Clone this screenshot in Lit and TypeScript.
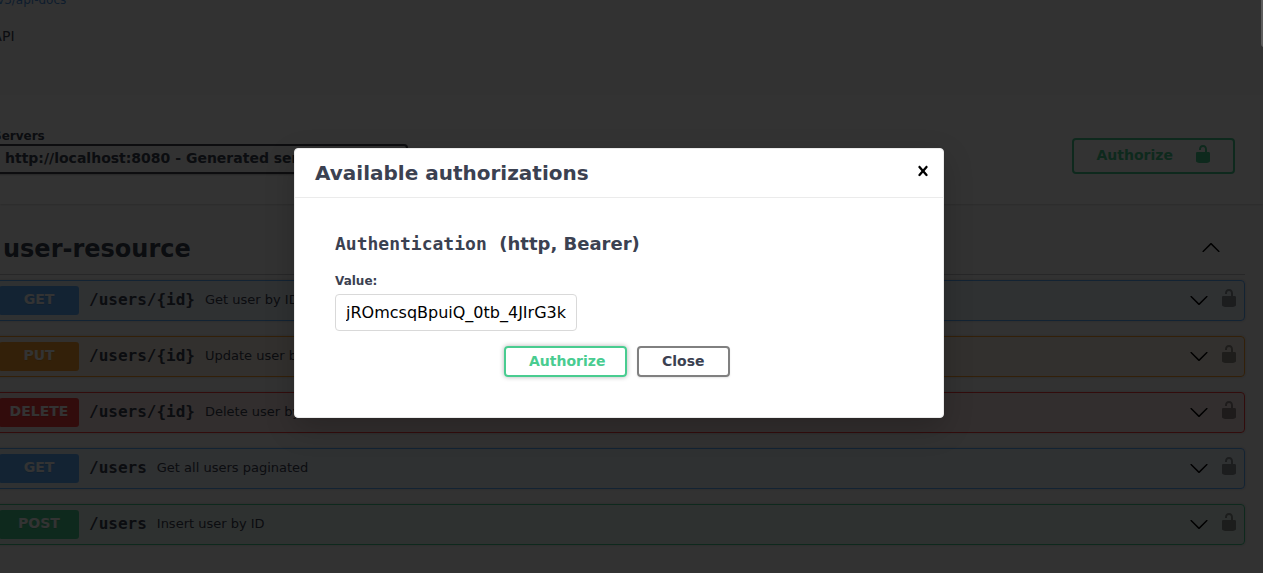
import { LitElement, html, css, svg } from "lit";
import { customElement, property } from "lit/decorators.js";

const UNLOCKED =
  "M15.8 8H14V5.6C14 2.703 12.665 1 10 1 7.334 1 6 2.703 6 5.6V6h2v-.801C8 3.754 8.797 3 10 3c1.203 0 2 .754 2 2.199V8H4c-.553 0-1 .646-1 1.199V17c0 .549.428 1.139.951 1.307l1.197.387C5.672 18.861 6.55 19 7.1 19h5.8c.549 0 1.428-.139 1.951-.307l1.196-.387c.524-.167.953-.757.953-1.306V9.199C17 8.646 16.352 8 15.8 8z";
const ARROW_DOWN =
  "M17.418 6.109c.272-.268.709-.268.979 0s.271.701 0 .969l-7.908 7.83c-.27.268-.707.268-.979 0l-7.908-7.83c-.27-.268-.27-.701 0-.969.271-.268.709-.268.979 0L10 13.25l7.418-7.141z";
const ARROW_UP =
  "M17.418 14.908c.272.268.709.268.979 0s.271-.701 0-.969l-7.908-7.83c-.27-.268-.707-.268-.979 0l-7.908 7.83c-.27.268-.27.701 0 .969.271.268.709.268.979 0L10 7.767l7.418 7.141z";
const CLOSE =
  "M14.348 14.849c-.469.469-1.229.469-1.697 0L10 11.819l-2.651 3.029c-.469.469-1.229.469-1.697 0-.469-.469-.469-1.229 0-1.697l2.758-3.15-2.759-3.152c-.469-.469-.469-1.228 0-1.697.469-.469 1.228-.469 1.697 0L10 8.183l2.651-3.031c.469-.469 1.228-.469 1.697 0 .469.469.469 1.229 0 1.697l-2.758 3.152 2.758 3.15c.469.469.469 1.229 0 1.698z";

const icon = (d: string, size = 20) => html`
  <svg width=${size} height=${size} viewBox="0 0 20 20">${svg`<path d=${d}></path>`}</svg>
`;

@customElement("operation-row")
export class OperationRow extends LitElement {
  @property() method = "get";
  @property() path = "";
  @property() summary = "";

  static styles = css`
    :host { display: block; }
    svg { display: block; }
    .row {
      box-sizing: border-box;
      height: 41px;
      display: flex;
      align-items: center;
      padding: 0 5px;
      border: 1px solid var(--tone);
      border-radius: 4px;
      box-shadow: 0 0 3px rgba(0, 0, 0, 0.19);
      color: #3b4151;
    }
    .get { --tone: #61affe; background: rgba(97, 175, 254, 0.1); }
    .put { --tone: #fca130; background: rgba(252, 161, 48, 0.1); }
    .delete { --tone: #f93e3e; background: rgba(249, 62, 62, 0.1); }
    .post { --tone: #49cc90; background: rgba(73, 204, 144, 0.1); }
    .method {
      width: 80px;
      height: 29px;
      line-height: 27px;
      border-radius: 3px;
      background: var(--tone);
      color: #fff;
      font-size: 14px;
      font-weight: 700;
      text-align: center;
      text-transform: uppercase;
      text-shadow: 0 1px 0 rgba(0, 0, 0, 0.1);
    }
    .path {
      padding: 0 10px 2px;
      font: 600 16px/20px "DejaVu Sans Mono", monospace;
    }
    .summary { flex: 1; padding-bottom: 2px; font-size: 13px; }
    .lock { margin: -5px 0 0 10px; opacity: 0.4; fill: #000; }
    .arrow { margin-top: -2px; }
  `;

  render() {
    return html`
      <div class="row ${this.method}">
        <span class="method">${this.method}</span>
        <span class="path">${this.path}</span>
        <span class="summary">${this.summary}</span>
        <span class="arrow">${icon(ARROW_DOWN)}</span>
        <span class="lock">${icon(UNLOCKED)}</span>
      </div>
    `;
  }
}

@customElement("auth-dialog")
export class AuthDialog extends LitElement {
  static styles = css`
    :host {
      display: block;
      box-sizing: border-box;
      width: 650px;
      height: 270px;
      border: 1px solid #ebebeb;
      border-radius: 4px;
      background: #fff;
      box-shadow: 0 10px 30px rgba(0, 0, 0, 0.2);
      color: #3b4151;
    }
    svg { display: block; }
    .head {
      display: flex;
      align-items: center;
      justify-content: space-between;
      height: 48px;
      padding: 0 10px 0 20px;
      border-bottom: 1px solid #ebebeb;
    }
    h3 { margin: 0; font-size: 20px; font-weight: 600; line-height: 24px; }
    .close { margin-top: -4px; }
    .body { padding: 35px 40px 0; }
    h4 { margin: 0; font-size: 18px; font-weight: 600; line-height: 22px; white-space: pre; }
    code { font-family: "DejaVu Sans Mono", monospace; font-size: 18px; }
    label { display: block; margin-top: 19px; font-size: 12px; font-weight: 700; line-height: 14px; }
    .field {
      box-sizing: border-box;
      display: flex;
      width: 242px;
      height: 37px;
      margin-top: 6px;
      padding: 0 10px;
      border: 1px solid #d9d9d9;
      border-radius: 4px;
      color: #000;
      font-size: 16px;
      line-height: 35px;
    }
    .value { flex: 1; display: flex; justify-content: flex-end; overflow: hidden; white-space: nowrap; }
    .actions { display: flex; justify-content: center; gap: 10px; margin: 15px 4px 0 0; }
    .btn {
      box-sizing: border-box;
      width: 93px;
      height: 31px;
      padding-left: 23px;
      border: 2px solid #808080;
      border-radius: 4px;
      font-size: 14px;
      font-weight: 700;
      line-height: 26px;
      box-shadow: 0 1px 2px rgba(0, 0, 0, 0.1);
    }
    .primary { width: 123px; border-color: #49cc90; color: #49cc90; box-shadow: 0 0 5px rgba(0, 0, 0, 0.3); }
  `;

  render() {
    return html`
      <div class="head">
        <h3>Available authorizations</h3>
        <span class="close">${icon(CLOSE)}</span>
      </div>
      <div class="body">
        <h4><code>Authentication</code>&nbsp; (http, Bearer)</h4>
        <label>Value:</label>
        <div class="field"><span class="value">jROmcsqBpuiQ_0tb_4JIrG3k</span></div>
        <div class="actions">
          <span class="btn primary">Authorize</span>
          <span class="btn">Close</span>
        </div>
      </div>
    `;
  }
}

const OPERATIONS = [
  { method: "get", path: "/users/{id}", summary: "Get user by ID" },
  { method: "put", path: "/users/{id}", summary: "Update user by ID" },
  { method: "delete", path: "/users/{id}", summary: "Delete user by ID" },
  { method: "get", path: "/users", summary: "Get all users paginated" },
  { method: "post", path: "/users", summary: "Insert user by ID" },
];

@customElement("app-root")
export class AppRoot extends LitElement {
  static styles = css`
    :host {
      display: block;
      position: relative;
      height: 573px;
      overflow: hidden;
      background: #fafafa;
      color: #3b4151;
      font-family: "DejaVu Sans", sans-serif;
    }
    svg { display: block; }
    .info { height: 95px; display: flex; flex-direction: column; align-items: flex-start; }
    .docs { margin: -8px 0 0 -7px; font-size: 12px; line-height: 16px; color: #4990e2; }
    .about { margin: 20px 0 0 -44px; font-size: 14px; line-height: 16px; }
    .scheme {
      box-sizing: border-box;
      height: 109px;
      display: flex;
      justify-content: space-between;
      padding: 34px 28px 0 0;
      background: #fff;
      box-shadow: 0 1px 2px rgba(0, 0, 0, 0.15);
    }
    .servers { width: 415px; margin-left: -7px; font-size: 12px; font-weight: 700; line-height: 14px; }
    .select {
      box-sizing: border-box;
      height: 30px;
      margin-top: 1px;
      padding-left: 10px;
      border: 2px solid #41444e;
      border-radius: 4px;
      background: #f7f7f7;
      box-shadow: 0 1px 2px rgba(0, 0, 0, 0.25);
      font-size: 14px;
      line-height: 25px;
      white-space: nowrap;
      overflow: hidden;
    }
    .authorize {
      box-sizing: border-box;
      display: flex;
      align-items: center;
      justify-content: space-between;
      width: 163px;
      height: 36px;
      margin-top: 9px;
      padding: 0 20px 4px 22.5px;
      border: 2px solid #49cc90;
      border-radius: 4px;
      color: #49cc90;
      fill: #49cc90;
      font-size: 14px;
      font-weight: 700;
    }
    .authorize span { padding-top: 2px; }
    .operations { margin: 0 18px 0 -7px; }
    .tag {
      box-sizing: border-box;
      height: 71px;
      display: flex;
      align-items: center;
      justify-content: space-between;
      padding: 16px 24px 0 10px;
      border-bottom: 1px solid rgba(59, 65, 81, 0.3);
    }
    h2 { margin: 0; padding-top: 4px; font-size: 24px; font-weight: 700; line-height: 30px; }
    .list { display: flex; flex-direction: column; gap: 15px; padding-top: 5px; }
    .backdrop {
      position: absolute;
      inset: 0;
      box-sizing: border-box;
      padding: 148px 0 0 294px;
      background: rgba(0, 0, 0, 0.8);
    }
    .thumb {
      position: absolute;
      top: -4px;
      right: -4px;
      width: 6px;
      height: 51px;
      border-radius: 3px;
      background: #5c5c5c;
    }
  `;

  render() {
    return html`
      <div class="info">
        <span class="docs">/v3/api-docs</span>
        <span class="about">User API</span>
      </div>
      <div class="scheme">
        <div class="servers">
          Servers
          <div class="select">http://localhost:8080 - Generated server url</div>
        </div>
        <div class="authorize"><span>Authorize</span>${icon(UNLOCKED)}</div>
      </div>
      <div class="operations">
        <div class="tag"><h2>user-resource</h2>${icon(ARROW_UP)}</div>
        <div class="list">
          ${OPERATIONS.map(
            (o) => html`<operation-row .method=${o.method} .path=${o.path} .summary=${o.summary}></operation-row>`
          )}
        </div>
      </div>
      <div class="backdrop"><auth-dialog></auth-dialog></div>
      <div class="thumb"></div>
    `;
  }
}
